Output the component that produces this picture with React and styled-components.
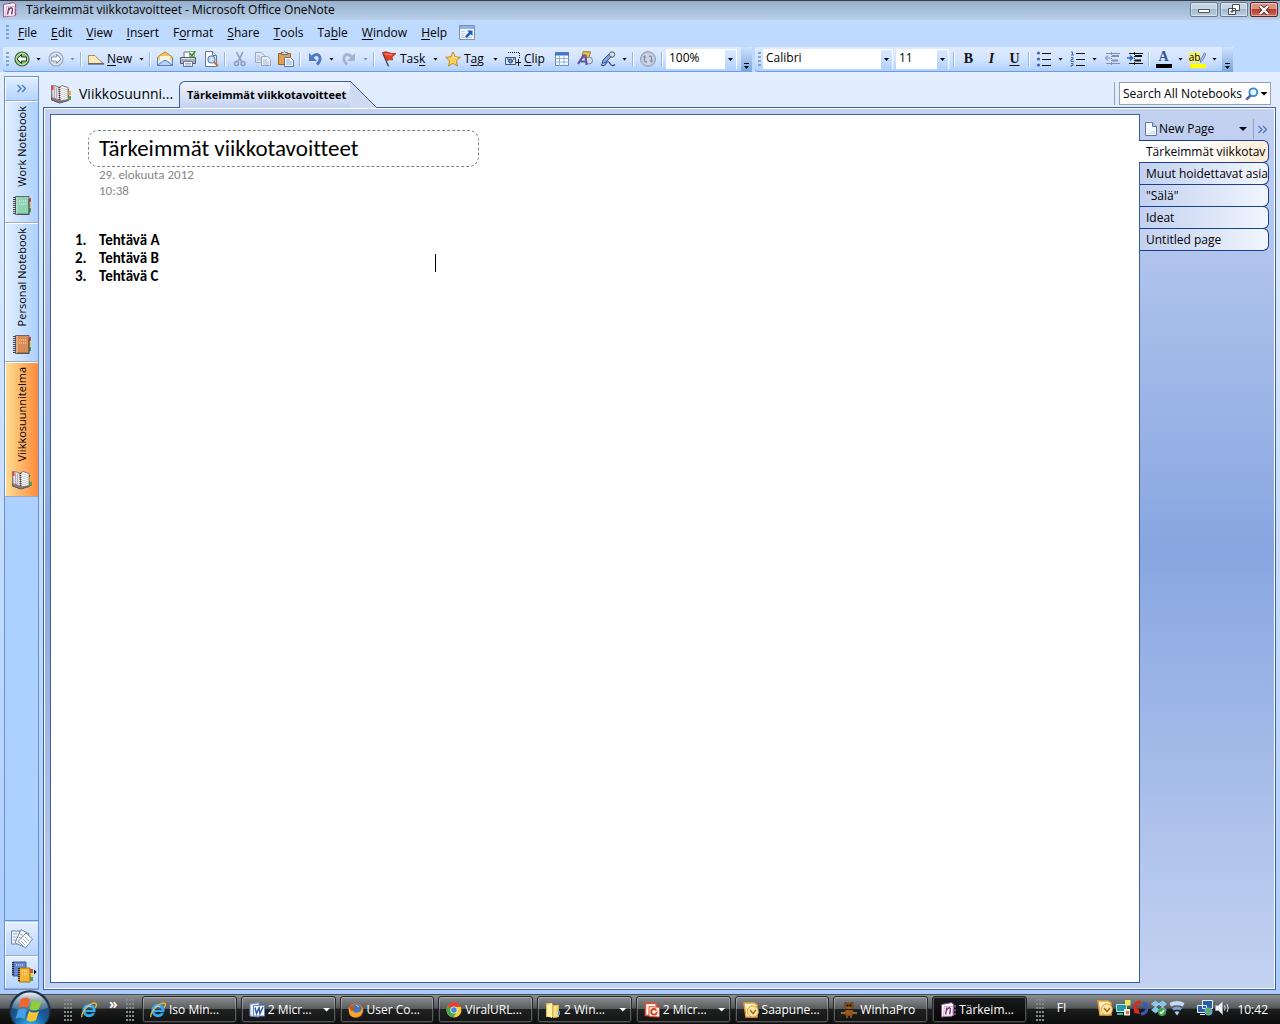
import React from "react";
import styled, { createGlobalStyle } from "styled-components";

const ui = `"Open Sans", "Noto Sans", sans-serif`;
const note = `Carlito, Lato, sans-serif`;
const line = "#3b5f9f";

const Global = createGlobalStyle`
  *, *::before, *::after { box-sizing: border-box; }
  html, body, #root { height: 100%; }
  body { margin: 0; overflow: hidden; font: 12px/16px ${ui}; color: #000; }
  button, input, select { font: inherit; color: inherit; margin: 0; padding: 0; border: 0; background: none; border-radius: 0; outline: 0; }
  svg { display: block; flex: none; }
  u { text-underline-offset: 2px; }
`;

/* ---------- icons ---------- */
const Svg = ({ s = 16, w, h, box = "0 0 16 16", children }) => (
  <svg width={w || s} height={h || s} viewBox={box} fill="none" aria-hidden="true">{children}</svg>
);

const OneNote = ({ s = 16 }) => (
  <Svg s={s}>
    <path d="M1.500 2.500 11.500.7l2 1.300v11.500l-12 1.500z" fill="#fbf4fb" stroke="#8d5a89" />
    <path d="M4.500 4.500h8.500l-1 9.500H3.500z" fill="#fff" stroke="#c9a3c7" strokeWidth=".8" />
    <path d="m5.500 12.500 1.500-7M6.500 8.500q2-3.500 3.500-2.500.8.800.2 3l-.7 3.500" stroke="#80397b" strokeWidth="1.500" />
    <path d="M15 3v2.500M15 7v2.500M15 11v2" stroke="#c58ac1" />
  </Svg>
);
const Arrow = ({ dir = 1, c, bg, edge }) => (
  <Svg>
    <circle cx="8" cy="8" r="7" fill={bg} stroke={edge} strokeWidth="1.200" />
    <circle cx="8" cy="8" r="5.800" stroke="#fff" opacity=".45" />
    <path d={dir < 0 ? "M3 8l4.500-4.500V6h5v4h-5v2.500z" : "M13 8 8.500 3.500V6h-5v4h5v2.500z"} fill="#fff" stroke={c} />
  </Svg>
);
const NewIcon = () => <Svg><path d="M.5 12.500V4.500h6.500q3 4 8.500 8z" fill="#fbe9bd" stroke="#a78d56" /><path d="M0 13h16" stroke="#2c3d6c" /></Svg>;
const Mail = () => (
  <Svg>
    <path d="M.5 6 8 .8 15.500 6v8.500H.5z" fill="#f6c15d" stroke="#c08f3d" />
    <path d="M3 5h10v6H3z" fill="#fff7dd" /><path d="m.5 7 5 4-5 3.500zM15.500 7l-5 4 5 3.500z" fill="#d4e6fb" />
    <path d="M.5 14.500 6 10q2-1.500 4 0l5.500 4.500z" fill="#b7d3f5" stroke="#587fb6" /><path d="M.5 7v7.500h15V7" stroke="#587fb6" />
  </Svg>
);
const Printer = () => (
  <Svg>
    <path d="M4 6V1h7v5" fill="#fff" stroke="#6e7486" /><path d="M.5 6.500h15v6H.5z" fill="#a7adb9" stroke="#555b68" />
    <path d="M1.500 7.500h13" stroke="#dfe3ea" /><path d="M3.500 10.500h9v5h-9z" fill="#f7fafe" stroke="#6e7486" />
    <path d="M5 12.500h6M5 14h6" stroke="#6f9cd6" strokeWidth=".8" />
    <path d="M9.500.500h5v5h-5z" fill="#e5f4df" stroke="#5b9e44" strokeWidth=".7" /><path d="m10 2.500 2 2L15.500 0" stroke="#2a8c24" strokeWidth="1.500" />
  </Svg>
);
const Preview = () => (
  <Svg>
    <path d="M2.500.500h7l4 4v11h-11z" fill="#fff" stroke="#62779c" /><path d="M9.500.500v4h4" fill="#d8e4f5" stroke="#62779c" />
    <circle cx="8.500" cy="8.500" r="3.500" fill="#c9e4f8" stroke="#5a7aa5" strokeWidth="1.200" /><path d="m11 11 4 4" stroke="#bb7828" strokeWidth="2" />
  </Svg>
);
const Cut = () => (
  <Svg>
    <path d="m4.500 1 5 9.500M11 1 6 10.500" stroke="#8d9cb8" strokeWidth="1.600" />
    <circle cx="4.500" cy="12.500" r="2" stroke="#8d9cb8" strokeWidth="1.400" /><circle cx="11" cy="12.500" r="2" stroke="#8d9cb8" strokeWidth="1.400" />
  </Svg>
);
const Copy = () => (
  <Svg>
    <path d="M.5 1.500h6l3 3v7h-9z" fill="#e2eaf7" stroke="#98a7c2" /><path d="M6.500 5.500h6l3 3v6h-9z" fill="#edf2fb" stroke="#98a7c2" />
    <path d="M2 5h3M2 7h4M2 9h4M8 9h4M8 11h6M8 13h6" stroke="#a9b6cd" />
  </Svg>
);
const Paste = () => (
  <Svg>
    <path d="M.5 2.500h12v11H.5z" fill="#e3a04c" stroke="#98651f" /><path d="M3.500 3.500v-2h2l1-1 1 1h2v2z" fill="#dadfe6" stroke="#666d7a" />
    <path d="M6.500 6.500h6l3 3v6h-9z" fill="#fff" stroke="#5d7398" /><path d="M8 9h4M8 11h6M8 13h6" stroke="#7ca2da" />
  </Svg>
);
const Undo = ({ dim, flip }) => (
  <Svg>
    <g transform={flip ? "matrix(-1 0 0 1 16 0)" : undefined}>
      <path d="M5 6q4-4 7-1.500 3 4-2 9" stroke={dim ? "#a3b3ce" : "#4a78c4"} strokeWidth="2.800" />
      <path d="M2 2v8h8z" fill={dim ? "#a3b3ce" : "#4a78c4"} />
    </g>
  </Svg>
);
const Flag = () => <Svg><path d="m2 2.500 5.500 12.800" stroke="#4b4b55" strokeWidth="1.500" /><path d="M1.500 1.500q3.500-1.500 6 0t7.500 1l-4 3.500.5 3q-3-1-5.500.5z" fill="#e5412d" stroke="#ae2418" strokeWidth=".8" /><path d="m4 3 7 1" stroke="#ff947e" /></Svg>;
const Star = () => <Svg><path d="m8 1 2.100 4.800 5.200.5-3.900 3.500 1.100 5.200L8 12.300 3.500 15l1.100-5.200L.7 6.300l5.200-.5z" fill="#fbd158" stroke="#b98b2a" /><path d="m8 3.500 1 3 3 .5" stroke="#fff1b5" /></Svg>;
const Clip = () => (
  <Svg><path d="M3 1.500h11.500V7" stroke="#111" strokeDasharray="1 1" /><path d="M13.500 8v7M10 11.500h6" stroke="#111" />
    <path d="M.5 6.500h10v7H.5z" fill="#d9e8fc" stroke="#38547c" /><circle cx="5.500" cy="10" r="2" fill="#6798d5" stroke="#263f6a" /><path d="M2 8h1.500M8 8h1.500" stroke="#111" /></Svg>
);
const Table = () => (
  <Svg><path d="M1.500 1.500h13v13h-13z" fill="#fff" stroke="#6a86b8" /><path d="M1 1.500h14v3H1z" fill="#4277c8" /><path d="M1.500 7.500h13M1.500 11h13M5.500 4v11M10 4v11" stroke="#8fb0de" /></Svg>
);
const Shapes = () => (
  <Svg><path d="M6 .8h7.500l-1.500 6H5z" fill="#f1c54d" stroke="#9f7c27" /><circle cx="12" cy="9.500" r="3.500" fill="#d2dcea" stroke="#7587a0" /><path d="m1 13 5.500-8.500h2L9.500 14" stroke="#5d55a5" strokeWidth="2.200" /><path d="M3.500 10.500H9" stroke="#5d55a5" strokeWidth="2" /></Svg>
);
const Pen = () => (
  <Svg><path d="M1 13.500q3 2.500 5-1t4 0 5 1" stroke="#2d3f6c" strokeWidth="1.200" /><path d="m2 12.500 1-3.500 6-6 2.500 2.500-6 6z" fill="#7ba4e0" stroke="#375792" /><circle cx="12" cy="3.500" r="2.700" fill="#d9dce5" stroke="#555b6a" /></Svg>
);
const Sync = () => (
  <Svg>
    <circle cx="8" cy="8" r="7.500" fill="#b8c2d4" stroke="#94a1b7" /><circle cx="8" cy="8" r="6" fill="#ccd4e2" />
    <path d="M4.500 5.500v4q0 1.500 2.500 1.200M11.500 10.500v-4Q11.500 5 9 5.300" stroke="#8290a9" strokeWidth="1.400" />
    <path d="M2.800 6.500 4.500 4l2 2.500zM13.200 9.500 11.500 12l-2-2.500z" fill="#8290a9" />
  </Svg>
);
const HelpWin = () => (
  <Svg><path d="M.5.500h15v14H.5z" fill="#f4f8ff" stroke="#7c8fb3" /><path d="M1 1h14v3H1z" fill="#8fb2ec" /><path d="M2 6.500h4M2 8.500h4M2 10.500h3M2 12.500h11" stroke="#bccae0" /><path d="M8 5.500h5.500V11l-1.800-1.800-4 3.800-1.700-1.700 3.800-4z" fill="#195dc0" /></Svg>
);
const List = ({ nums }) => (
  <Svg>
    {[2, 8, 14].map((y, i) => (
      <g key={y}>
        <path d={`M6 ${y + 0.5}h9`} stroke="#111" />
        {nums ? <path d={i ? `M1 ${y - 1.5}h2v2H1v2h3` : `M1 ${y - 1}h1.500V${y + 2}M1 ${y + 2}h3`} stroke="#3e68b4" /> : <circle cx="2.500" cy={y} r="1.600" fill="#3e68b4" />}
      </g>
    ))}
  </Svg>
);
const Indent = ({ dim }) => {
  const c = dim ? "#8190ac" : "#111";
  return (
    <Svg>
      <path d="M2 2.500h14M2 12.500h14" stroke={c} /><path d="M8 5h7M8 9.500h6" stroke={c} strokeWidth="2" /><path d="M7.500 1v14" stroke={c} strokeDasharray="1 1" />
      <path d={dim ? "M6.500 7H2M4 4.500 1.500 7 4 9.500" : "M0 7h5M3 4.500 5.500 7 3 9.500"} stroke={dim ? "#94aad0" : "#2465cf"} strokeWidth="1.600" />
    </Svg>
  );
};
const Marker = () => <Svg w={6} h={11} box="0 0 6 11"><path d="M0 10.500 1 7l3.500-6L6 2 2.500 8.500z" fill="#c3cbe0" stroke="#5b6a94" strokeWidth=".8" /></Svg>;
const Magnifier = () => <Svg s={14}><circle cx="9.500" cy="6" r="4.500" fill="#e4f5ff" stroke="#3989cc" strokeWidth="2" /><path d="m6.500 9.500-5 5" stroke="#505fa3" strokeWidth="3" /></Svg>;
const PageIcon = () => <Svg w={12} h={14} box="0 0 12 14"><path d="M.5.500h7l4 4v9H.5z" fill="#f7fbff" stroke="#65799e" /><path d="M7.500.500v4h4" fill="#b9cbe8" stroke="#65799e" /><path d="M2 12h8V8z" fill="#d3e2f7" /></Svg>;
const Chevrons = () => <Svg w={9} h={9} box="0 0 9 9"><path d="m.5 1 3.500 3.500L.5 8M5 1l3.500 3.500L5 8" stroke="#4778bb" strokeWidth="1.300" /></Svg>;
const Notebook = ({ c }) => (
  <Svg w={18} h={20} box="0 0 18 20">
    <path d="M14 2h4v4h-4z" fill="#dd4b42" /><path d="M14 7h4v4h-4z" fill="#f0b93a" /><path d="M14 12h4v4h-4z" fill="#559d4c" />
    <path d="M2.500.500H16v18H2.500z" fill={c} stroke="#6b6663" /><path d="M4 1v17" stroke="#fff" opacity=".5" />
    <path d="M1.500 1v18" stroke="#444" strokeWidth="3" strokeDasharray="1 1" /><path d="M6 5h7M6 8h7" stroke="#fff" strokeDasharray="1 1" opacity=".8" /><path d="M4 18h12V3" stroke="#0003" strokeWidth="2" />
  </Svg>
);
const OpenBook = () => (
  <Svg w={22} h={20} box="0 0 22 20">
    <path d="M2 4 1.500 16l8 3 9-2.500V5" fill="#857a80" stroke="#5d5158" /><path d="M18 7h3v4h-3z" fill="#f1aa34" /><path d="M18 12h3v4h-3z" fill="#53a24d" />
    <path d="M1.500 1.500 6 2l4 2v13l-5-2.500-3-.5z" fill="#e6e3e6" stroke="#81757b" /><path d="M1 2h2.500v4H1z" fill="#d74c4e" /><path d="M4.500 3v11M6.500 4v11" stroke="#b3adb1" />
    <path d="M9 3.500 12 1.500l6 2v12l-8 1.500z" fill="#fff" stroke="#81757b" /><path d="M12 4v11M14 4v11M16 5v10" stroke="#a9a3a7" strokeDasharray="1 1" /><path d="M9.500 3v14" stroke="#504850" strokeWidth="2" strokeDasharray="1 1" />
  </Svg>
);
const Pages = () => (
  <Svg w={22} h={20} box="0 0 22 20"><path d="M.5 2h8v13h-8z" fill="#f2f6fd" stroke="#7283a3" /><path d="m10 .700 8 4-6 13-8-4z" fill="#f8faff" stroke="#7283a3" /><path d="m15 4 6.500 6-7 9L7 12.500z" fill="#fff" stroke="#7283a3" /><path d="M2 5h4M2 8h4M2 11h3M9 5l4 2M8 8l3 2M14 8l4 4M12 10l4 4M10 12l4 4" stroke="#9daac3" /></Svg>
);
const Books = () => (
  <Svg w={22} h={22} box="0 0 22 22"><path d="M2 1h13v14H2z" fill="#6486d0" stroke="#3d5697" /><path d="M2 1v14" stroke="#222" strokeWidth="2" strokeDasharray="1 1" /><path d="M18 8h4v4h-4z" fill="#dd4b42" /><path d="M18 12.500h4v3h-4z" fill="#f0d03a" /><path d="M18 16h4v4h-4z" fill="#559d4c" /><path d="M8 7h11v14H8z" fill="#f7b52d" stroke="#987125" /><path d="M8 7v14" stroke="#222" strokeWidth="2" strokeDasharray="1 1" /><path d="M5 4h7M11 10h6M11 13h6" stroke="#fff" strokeDasharray="1 1" /></Svg>
);
const IE = () => (
  <Svg w={16} h={16} box="0 0 17 17"><circle cx="8.500" cy="9" r="5.500" stroke="#35a8ec" strokeWidth="3.200" /><path d="M4 9.500h10" stroke="#35a8ec" strokeWidth="2.500" /><path d="M11.500 11H17v1h-5z" fill="#191919" /><path d="M1 16Q0 12 6 6q6-6 9.500-4.500 2 1-.5 4.500" stroke="#f2bd35" strokeWidth="1.400" /><path d="M5 5.500q3-2.500 6 0" stroke="#a1e0ff" /></Svg>
);
const Word = () => <Svg><path d="M1 2 10 .8V15L1 14z" fill="#e8effb" stroke="#6f8fc9" /><path d="M4.500 3.500h11v10.500h-11z" fill="#fff" stroke="#5f86c8" /><path d="m6 5.500 1.500 6L10 6l1 5.500L14 5" stroke="#2c56a8" strokeWidth="1.500" /></Svg>;
const Ppt = () => <Svg><path d="M1.500 1.500h10.500l1.500 12H1.500z" fill="#fff" stroke="#e0552e" strokeWidth="1.600" /><path d="m5 4.500 10.500.8V15L5 14.500z" fill="#fff4ee" stroke="#dc4d25" /><circle cx="10" cy="9.800" r="2.800" stroke="#d84120" strokeWidth="1.800" /><path d="M10 9.500h3v-3" stroke="#fff" /></Svg>;
const Outlook = () => <Svg><path d="M1 1h10l3 2v12H3z" fill="#fff2cb" stroke="#e8a135" strokeWidth="1.500" /><circle cx="9.800" cy="9.500" r="5.600" fill="#fbe6a8" stroke="#d99a35" /><path d="m7 8 3 3.500L13 8" stroke="#a96515" strokeWidth="1.500" /></Svg>;
const Firefox = () => <Svg><circle cx="8" cy="8.500" r="7.300" fill="#e5701c" /><circle cx="8.500" cy="7" r="4.800" fill="#3b78c6" /><path d="M1 4q0 4 4 5 2 3 6 1 2 0 3.500-5 1 6-3 9-6 3-9.500-1Q0 9 1 4z" fill="#f9a52b" /><path d="m2 4 5 1-1 3-3 1z" fill="#ca4d15" /><path d="m8 3 3 2" stroke="#a9d9f7" /></Svg>;
const Chrome = () => <Svg><circle cx="8" cy="8" r="7.500" fill="#f7cb38" /><path d="M8 8 1.500 4.200A7.500 7.500 0 0 1 15 5H8z" fill="#df4231" /><path d="m8 8-6.500-3.800A7.500 7.500 0 0 0 7.500 15.500l3.500-6z" fill="#48a54a" /><circle cx="8" cy="8" r="3.600" fill="#f5f5f5" /><circle cx="8" cy="8" r="2.800" fill="#4388dd" /></Svg>;
const Folder = () => <Svg><path d="M1 1h6l1 2h6v12H1z" fill="#e1b850" /><path d="m2 3 5-2v15l-5-2z" fill="#fff1a9" /><path d="m8 4 5-1v12l-5 1z" fill="#f7df83" stroke="#cda842" strokeWidth=".6" /><path d="M14 9v4" stroke="#519bd8" strokeWidth="2" /></Svg>;
const Owl = () => (
  <Svg>
    <path d="m4 0 2 1h4l2-1v5l-1 2q3 4 0 7H5q-3-3 0-7L4 5z" fill="#96591f" stroke="#4a2a0c" strokeWidth=".6" />
    <circle cx="6.500" cy="3.500" r="1.200" fill="#2b1606" /><circle cx="9.500" cy="3.500" r="1.200" fill="#2b1606" /><path d="M5 7.500h6" stroke="#2b1606" /><path d="M5 15h2m2 0h2" stroke="#d58c35" />
    <path d="M.5 11h3M12.500 11h3" stroke="#f3c62c" strokeDasharray="1 1" strokeWidth="2" />
  </Svg>
);
const Bits = () => <Svg><path d="M1.500 4.500h10v7h-10z" fill="#2599a5" stroke="#b8e6df" /><path d="M10 0h5.500v5.500H10z" fill="#f0ea5a" /><path d="M9 9h6v6.500H9z" fill="#e2eee8" /><path d="M2 14h6" stroke="#47b9a3" strokeWidth="2" /><path d="M11 11h3v3h-3z" fill="#df7439" /></Svg>;
const Swirl = () => <Svg><path d="M8 2Q0 2 3 12" stroke="#d52d24" strokeWidth="3.200" /><path d="m7 14-6-1 4-5z" fill="#d52d24" /><path d="M8 14q8-1 5-10" stroke="#3858b4" strokeWidth="3.200" /><path d="m9 2 6 1-4 5z" fill="#3858b4" /></Svg>;
const Dropbox = () => <Svg><path d="m4.500 1 4 3-4 3-4-3zM11.500 1l4 3-4 3-4-3zM4.500 7l4 3-4 3-4-3zM11.500 7l4 3-4 3-4-3z" fill="#7bc8f4" stroke="#c9edff" strokeWidth=".5" /><circle cx="11" cy="12" r="4" fill="#38a74b" /><path d="m9 12 1.500 1.500L13 10" stroke="#fff" strokeWidth="1.400" /></Svg>;
const Wifi = () => <Svg><path d="M.5 3q7.500-4 15 0l-1.500 3.500q-6-2.500-12 0z" fill="#c3d8f2" /><path d="M3 8q5-2.500 10 0l-1.500 2.500q-3.500-1.500-7 0z" fill="#78a1d2" /><path d="M5.500 12q2.500-1.500 5 0L8 15.500z" fill="#b5cee9" /></Svg>;
const Net = () => <Svg><path d="M5.500.500h10v8h-10zM.5 5.500h9v7h-9z" fill="#275da9" stroke="#e9f1f8" /><circle cx="11.500" cy="11.500" r="4" fill="#55acd8" /><path d="m9 9 4-1 1 4-3 3z" fill="#65ad48" /><path d="M3 14.500h5" stroke="#fff" /></Svg>;
const Sound = () => <Svg><path d="M.5 5.500h3l4-4v13l-4-4h-3z" fill="#eef1f5" stroke="#9ba3ad" /><path d="M9.500 5.500q1.500 2.500 0 5M12 4q2.500 4 0 8" stroke="#e2e9f1" /></Svg>;
const Orb = () => (
  <Svg s={42} box="0 0 42 42">
    <defs><radialGradient id="orb" cx=".5" cy=".9" r=".9"><stop stopColor="#35bcf1" /><stop offset=".45" stopColor="#175da0" /><stop offset="1" stopColor="#263a4d" /></radialGradient><linearGradient id="gloss" x2="0" y2="1"><stop stopColor="#f3f7fa" /><stop offset="1" stopColor="#7890a3" stopOpacity=".4" /></linearGradient></defs>
    <circle cx="21" cy="21" r="20" fill="url(#orb)" stroke="#1d3042" strokeWidth="1.500" /><path d="M3 18A18.200 18.200 0 0 1 39 18Q21 24 3 18z" fill="url(#gloss)" />
    <path d="M12 9q5-3 9 0l-2.500 9q-5-3-9 0z" fill="#ef672d" /><path d="M23 10q5 3 10 0l-3 9q-5 3-9.500 0z" fill="#8fcb3d" /><path d="M9 20q5-3 9 0l-2.500 9q-5-3-9 0z" fill="#46a1e2" /><path d="M20 21q5 3 10 0l-3 9q-5 3-9.500 0z" fill="#fbc52f" />
  </Svg>
);

/* ---------- shell ---------- */
const Shell = styled.div`display: flex; flex-direction: column; height: 100vh; background: #bfdaff;`;
const TitleBar = styled.header`
  display: flex; align-items: center; height: 20px; padding: 0 2px 1px; gap: 8px;
  border-top: 1px solid #3b3a3d; background: linear-gradient(#94afce, #b9d0e8);
  h1 { flex: 1; margin: 0; font-size: 12px; font-weight: 400; }
`;
const WinButtons = styled.div`display: flex; gap: 2px; align-self: flex-start; padding-top: 1px;`;
const WinButton = styled.button`
  display: grid; place-items: center; width: 28px; height: 15px; border: 1px solid ${p => (p.$close ? "#5c2424" : "#65798f")}; border-radius: 2px;
  box-shadow: inset 0 0 0 1px #ffffff70;
  background: ${p => (p.$close ? "linear-gradient(#d99284 0 45%, #b8392c 45%, #d06a50)" : "linear-gradient(#c6d5e6 0 45%, #9fb5cd 45%, #bdd0e4)")};
`;
const Grip = styled.span`width: 3px; height: 15px; margin: 0 1px 0 3px; flex: none; background: repeating-linear-gradient(#7ba2da 0 2px, transparent 2px 4px);`;
const MenuBar = styled.nav`display: flex; align-items: center; height: 27px; padding: 0 3px 2px;`;
const Menus = styled.div`display: flex; padding: 0 1px;`;
const MenuItem = styled.button`padding: 0 7px; height: 20px; &:hover { background: #ffe7a2; }`;

const Toolbars = styled.div`display: flex; gap: 3px; height: 25px; padding-left: 3px;`;
const Toolbar = styled.div`
  display: flex; align-items: center; border-radius: 3px 0 0 3px; border-bottom: 1px solid #6d9ddd;
  background: linear-gradient(#dfebff, #d3e4ff 50%, #b0d0fd);
`;
const ToolButton = styled.button`
  display: flex; align-items: center; justify-content: ${p => (p.$w ? "flex-start" : "center")}; gap: 3px; white-space: nowrap;
  width: ${p => p.$w || 23}px; height: 22px; padding: ${p => (p.$w ? "0 0 0 4px" : 0)}; flex: none;
  &:hover { background: #ffe7a2; }
`;
const DropButton = styled.button`display: grid; place-items: center; width: 11px; height: 22px; flex: none; color: ${p => (p.$dim ? "#8190ac" : "#000")};`;
const Caret = styled.span`flex: none; width: ${p => (p.$big ? 8 : 5)}px; height: ${p => (p.$big ? 4 : 3)}px; background: currentColor; clip-path: polygon(0 0, 100% 0, 50% 100%);`;
const Divider = styled.span`width: 2px; height: 15px; margin: 0 2px; flex: none; background: linear-gradient(90deg, #8fb7ee 50%, #fff 50%);`;
const Overflow = styled.button`
  display: flex; flex-direction: column; align-items: center; justify-content: flex-end; gap: 2px; align-self: stretch;
  width: 11px; margin: 0 0 -1px 2px; padding-bottom: 3px; border-radius: 0 3px 3px 0; background: linear-gradient(#cfe1fb, #7aa5df);
  &::before { content: ""; width: 5px; height: 1px; background: #000; }
`;
const ComboBox = styled.div`
  display: grid; grid-template-columns: 1fr 11px; align-items: stretch; width: ${p => p.$w}px; height: 20px; margin: 0 2px 0 1px; padding: 1px; background: #fff;
  select { grid-area: 1 / 1 / 2 / 3; appearance: none; padding: 0 12px 3px 2px; min-width: 0; }
`;
const ComboArrow = styled.span`grid-area: 1 / 2; display: grid; place-items: center; pointer-events: none; background: linear-gradient(#dceaff, #b3d1fc);`;
const Letter = styled.span`font: ${p => p.$f || ""} 14px/16px "Liberation Serif", serif; color: ${p => p.$c || "#111"};`;
const Swatch = styled.span`
  display: flex; align-items: center; justify-content: center; width: 16px; height: 17px; border-bottom: 4px solid ${p => p.$c};
`;
const Marked = styled.span`font-size: 10px; line-height: 11px; background: #f5f06d;`;

/* ---------- body ---------- */
const Body = styled.div`display: flex; flex: 1; min-height: 0; padding: 0 4px; gap: 4px; background: linear-gradient(#e3eeff, #cfe2ff 35%, #a9cbff);`;
const Rail = styled.aside`
  display: flex; flex-direction: column; width: 35px; margin: 4px 0; border: 1px solid #6593cf; background: #acd0ff; flex: none;
`;
const RailButton = styled.button`
  display: flex; flex-direction: column; align-items: center; justify-content: ${p => (p.$book ? "space-between" : "center")};
  height: ${p => p.$h}px; padding: ${p => (p.$book ? "5px 0 6px" : 0)}; border-bottom: 1px solid #a0acbd; box-shadow: inset 1px 1px #fff;
  background: ${p => (p.$active ? "linear-gradient(90deg, #ffdf93, #ff8b3b)" : p.$book ? "linear-gradient(90deg, #e3efff, #acd0ff)" : "linear-gradient(#e3efff, #b5d4ff)")};
`;
const RailLabel = styled.span`writing-mode: vertical-rl; transform: rotate(180deg); white-space: nowrap; font-size: 11px; line-height: 18px;`;
const RailSpace = styled.div`flex: 1; border-bottom: 1px solid #6593cf; margin-bottom: 1px;`;
const BooksRow = styled.div`display: flex; align-items: center; gap: 1px; padding-left: 4px;`;
const SideCaret = styled.span`width: 3px; height: 6px; background: #000; clip-path: polygon(0 0, 100% 50%, 0 100%);`;

const Main = styled.main`display: flex; flex: 1; flex-direction: column; min-width: 0; padding-bottom: 4px;`;
const SectionRow = styled.div`display: flex; align-items: flex-end; height: 36px; margin-bottom: -1px; z-index: 1;`;
const BookName = styled.button`display: flex; align-items: center; gap: 7px; width: 136px; height: 28px; padding-left: 7px; font-size: 14px; white-space: nowrap;`;
const SectionTab = styled.button`
  display: flex; height: 27px; font-size: 11px; font-weight: 700; white-space: nowrap;
  span { height: 27px; width: 171px; padding: 5px 0 0 7px; text-align: left; border: solid ${line}; border-width: 1px 0 0 1px; border-radius: 6px 0 0 0; background: linear-gradient(#f1f4fc, #dbe4f6 50%, #c4d2f1); }
  &::after { content: ""; width: 27px; height: 27px; background: linear-gradient(to top right, #d0dbf3 49%, ${line} 49% 51%, transparent 51%); }
`;
const SearchArea = styled.div`display: flex; margin: 0 5px 3px auto; padding-left: 4px; border-left: 1px solid #9b9fa8;`;
const SearchBox = styled.label`
  display: flex; align-items: center; gap: 1px; width: 152px; height: 23px; padding: 0 2px 0 3px; border: 1px solid #9b9fa8; background: #fff;
  input { flex: 1; min-width: 0; }
`;
const Frame = styled.div`
  display: flex; flex: 1; min-height: 0; padding: 5px; border: 1px solid ${line}; box-shadow: inset 0 0 0 1px #fff;
  background: linear-gradient(#c4d2f1, #87a6e1 50%, #c4d2f1);
`;
const Pane = styled.article`position: relative; flex: 1; min-width: 0; margin: 1px 0 1px 1px; padding: 15px 24px; border: 1px solid ${line}; background: #fff; font-family: ${note}; font-variant-ligatures: none;`;
const TitleInput = styled.input`
  && { display: block; width: 391px; height: 37px; margin-left: 13px; padding: 0 10px 2px; border: 1px dashed #808080; border-radius: 10px; font-size: 23px; line-height: 28px; }
`;
const Stamp = styled.p`margin: 0 0 32px 24px; font-size: 13px; color: #858585; time { display: block; }`;
const Tasks = styled.ol`
  margin: 0; padding: 0; list-style: none; font-weight: 700; font-size: 15px; line-height: 18px;
  li { display: flex; } li span { width: 24px; }
`;
const InsertionPoint = styled.span`position: absolute; left: 384px; top: 139px; width: 1px; height: 18px; background: #000;`;

const PageList = styled.aside`display: flex; flex-direction: column; width: 130px; flex: none; padding-top: 5px;`;
const PageHead = styled.div`display: flex; align-items: center; height: 22px; padding-left: 5px;`;
const NewPage = styled.button`display: flex; flex: 1; align-items: center; gap: 2px;`;
const Collapse = styled.button`display: grid; place-items: center; width: 17px; height: 20px; margin-left: 6px; border-left: 1px solid #9aa4b8;`;
const PageTab = styled.button`
  height: 23px; margin: 0 1px -1px ${p => (p.$active ? "-1px" : 0)}; padding: 0 0 0 ${p => (p.$active ? 7 : 6)}px; overflow: hidden; white-space: nowrap; text-align: left;
  border: solid #17408f; border-width: 1px 1px 1px 0; border-radius: 0 6px 6px 0; position: relative;
  background: ${p => (p.$active ? "linear-gradient(90deg, #fff 40%, #ffecd6)" : "linear-gradient(90deg, #c3d1f0, #f1f5fd)")};
`;

/* ---------- task bar ---------- */
const TaskBar = styled.footer`
  display: flex; align-items: center; height: 30px; padding: 0 12px 0 9px; color: #fff; border-top: 1px solid #4a4d50;
  background: linear-gradient(#8b8e90, #55585a 45%, #1b1c1d 50%, #0c0c0c);
`;
const Start = styled.button`align-self: flex-start; width: 42px; height: 29px; margin-right: 13px; position: relative; svg { position: absolute; left: 0; top: -5px; clip-path: inset(0 0 7px); }`;
const Dots = styled.span`width: 9px; height: 22px; flex: none; background: radial-gradient(circle at 1px 1px, #86888a 0 1px, transparent 1px) 0 0 / 3px 4px;`;
const Quick = styled.button`margin: 0 12px 0 8px;`;
const More = styled.button`align-self: flex-start; width: 8px; margin: 1px 9px 0 0; font-weight: 700; font-size: 14px;`;
const Windows = styled.div`display: flex; flex: 1; gap: 4px; min-width: 0; margin: 0 9px 0 7px;`;
const TaskButton = styled.button`
  display: flex; flex: 1; align-items: center; gap: 3px; min-width: 0; height: 27px; padding: 0 4px 0 7px; color: #fff;
  border: 1px solid #252627; border-radius: 3px; box-shadow: inset 0 0 0 1px #ffffff48;
  background: ${p => (p.$active ? "linear-gradient(#1a1b1c, #050505)" : "linear-gradient(#8a8d8f, #58595b 48%, #202122 50%, #141414)")};
  b { flex: 1; font-weight: 400; text-align: left; overflow: hidden; white-space: nowrap; }
`;
const Lang = styled.button`margin: 0 31px 3px 12px;`;
const Tray = styled.div`display: flex; gap: 2px; margin: 0 6px 4px 0; svg:nth-child(6) { margin-left: 10px; }`;

const Drop = ({ dim, label }) => <DropButton $dim={dim} aria-label={label}><Caret /></DropButton>;
const Combo = ({ w, label, value }) => (
  <ComboBox $w={w}><select aria-label={label} defaultValue={value}><option>{value}</option></select><ComboArrow><Caret /></ComboArrow></ComboBox>
);
const Tool = ({ label, children }) => <ToolButton aria-label={label}>{children}</ToolButton>;

const menus = [["", "F", "ile"], ["", "E", "dit"], ["", "V", "iew"], ["", "I", "nsert"], ["F", "o", "rmat"], ["", "S", "hare"], ["", "T", "ools"], ["Ta", "b", "le"], ["", "W", "indow"], ["", "H", "elp"]];
const windows = [
  [IE, "Iso Min..."], [Word, "2 Micr...", true], [Firefox, "User Co..."], [Chrome, "ViralURL..."], [Folder, "2 Win...", true],
  [Ppt, "2 Micr...", true], [Outlook, "Saapune..."], [Owl, "WinhaPro"], [OneNote, "Tärkeim..."],
];
const pages = ["Tärkeimmät viikkotav", "Muut hoidettavat asia", "\"Sälä\"", "Ideat", "Untitled page"];

export default function App() {
  return (
    <Shell>
      <Global />
      <TitleBar>
        <OneNote /><h1>Tärkeimmät viikkotavoitteet - Microsoft Office OneNote</h1>
        <WinButtons>
          <WinButton aria-label="Minimize"><Svg w={12} h={9} box="0 0 12 9"><path d="M.5 4.500h11v3H.5z" fill="#fff" stroke="#555" /></Svg></WinButton>
          <WinButton aria-label="Restore"><Svg w={12} h={11} box="0 0 12 11"><path d="M4.500.500h7v6h-7zM.5 4.500h7v6h-7z" fill="#fff" stroke="#444b55" /><path d="M3 7h2v1H3z" fill="#9fb5cd" stroke="#444b55" /></Svg></WinButton>
          <WinButton $close aria-label="Close"><Svg w={12} h={10} box="0 0 12 10"><path d="m2 1 8 8m0-8L2 9" stroke="#5c2424" strokeWidth="4" /><path d="m2 1 8 8m0-8L2 9" stroke="#fff" strokeWidth="2.400" /></Svg></WinButton>
        </WinButtons>
      </TitleBar>
      <MenuBar>
        <Grip />
        <Menus>{menus.map(([a, b, c]) => <MenuItem key={a + b + c}>{a}<u>{b}</u>{c}</MenuItem>)}</Menus>
        <ToolButton aria-label="Full page view"><HelpWin /></ToolButton>
      </MenuBar>
      <Toolbars>
        <Toolbar role="toolbar" aria-label="Standard">
          <Grip />
          <Tool label="Back"><Arrow dir={-1} c="#1c3a18" bg="#8bc675" edge="#3c6236" /></Tool><Drop label="Back list" />
          <Tool label="Forward"><Arrow c="#8594b2" bg="#ccd7ea" edge="#94a3be" /></Tool><Drop dim label="Forward list" />
          <Divider />
          <ToolButton $w={52}><NewIcon /><span><u>N</u>ew</span></ToolButton><Drop label="New list" />
          <Divider />
          <Tool label="E-mail"><Mail /></Tool><Tool label="Print"><Printer /></Tool><Tool label="Print preview"><Preview /></Tool>
          <Divider />
          <Tool label="Cut"><Cut /></Tool><Tool label="Copy"><Copy /></Tool><Tool label="Paste"><Paste /></Tool>
          <Divider />
          <Tool label="Undo"><Undo /></Tool><Drop label="Undo list" /><Tool label="Redo"><Undo dim flip /></Tool><Drop dim label="Redo list" />
          <Divider />
          <ToolButton $w={53}><Flag /><span>Tas<u>k</u></span></ToolButton><Drop label="Task list" />
          <ToolButton $w={49}><Star /><span>T<u>a</u>g</span></ToolButton><Drop label="Tag list" />
          <ToolButton $w={49}><Clip /><span><u>C</u>lip</span></ToolButton>
          <Tool label="Table"><Table /></Tool><Tool label="Drawing"><Shapes /></Tool><Tool label="Pen"><Pen /></Tool><Drop label="Pen list" />
          <Divider />
          <Tool label="Sync"><Sync /></Tool>
          <Divider />
          <Combo w={71} label="Zoom" value="100%" />
          <Overflow aria-label="More standard tools"><Caret /></Overflow>
        </Toolbar>
        <Toolbar role="toolbar" aria-label="Formatting">
          <Grip />
          <Combo w={130} label="Font" value="Calibri" /><Combo w={53} label="Font size" value="11" />
          <Divider />
          <Tool label="Bold"><Letter $f="bold">B</Letter></Tool><Tool label="Italic"><Letter $f="italic bold">I</Letter></Tool><Tool label="Underline"><Letter $f="bold"><u>U</u></Letter></Tool>
          <Divider />
          <Tool label="Bullets"><List /></Tool><Drop label="Bullet styles" /><Tool label="Numbering"><List nums /></Tool><Drop label="Number styles" />
          <Tool label="Decrease indent"><Indent dim /></Tool><Tool label="Increase indent"><Indent /></Tool>
          <Divider />
          <Tool label="Font color"><Swatch $c="#000"><Letter $f="bold" $c="#36558f">A</Letter></Swatch></Tool><Drop label="Font colors" />
          <Tool label="Highlight"><Swatch $c="#ff0"><Marked>ab</Marked><Marker /></Swatch></Tool><Drop label="Highlight colors" />
          <Overflow aria-label="More formatting tools"><Caret /></Overflow>
        </Toolbar>
      </Toolbars>
      <Body>
        <Rail>
          <RailButton $h={24} aria-label="Expand navigation bar"><Chevrons /></RailButton>
          <RailButton $book $h={122}><RailLabel>Work Notebook</RailLabel><Notebook c="#8fd3b5" /></RailButton>
          <RailButton $book $h={139}><RailLabel>Personal Notebook</RailLabel><Notebook c="#d98d55" /></RailButton>
          <RailButton $book $active $h={135}><RailLabel>Viikkosuunnitelma</RailLabel><OpenBook /></RailButton>
          <RailSpace />
          <RailButton $h={34} aria-label="Unfiled notes"><Pages /></RailButton>
          <RailButton $h={33} aria-label="All notebooks"><BooksRow><Books /><SideCaret /></BooksRow></RailButton>
        </Rail>
        <Main>
          <SectionRow>
            <BookName><OpenBook />Viikkosuunni...</BookName>
            <SectionTab><span>Tärkeimmät viikkotavoitteet</span></SectionTab>
            <SearchArea>
              <SearchBox><input aria-label="Search" defaultValue="Search All Notebooks" /><Magnifier /><Caret $big /></SearchBox>
            </SearchArea>
          </SectionRow>
          <Frame>
            <Pane>
              <TitleInput aria-label="Page title" defaultValue="Tärkeimmät viikkotavoitteet" />
              <Stamp><time>29. elokuuta 2012</time><time>10:38</time></Stamp>
              <Tasks>
                {["A", "B", "C"].map((t, i) => <li key={t}><span>{i + 1}.</span>Tehtävä {t}</li>)}
              </Tasks>
              <InsertionPoint />
            </Pane>
            <PageList>
              <PageHead><NewPage><PageIcon />New Page</NewPage><Caret $big /><Collapse aria-label="Collapse page tabs"><Chevrons /></Collapse></PageHead>
              {pages.map((t, i) => <PageTab key={t} $active={i === 0}>{t}</PageTab>)}
            </PageList>
          </Frame>
        </Main>
      </Body>
      <TaskBar>
        <Start aria-label="Start"><Orb /></Start>
        <Dots />
        <Quick aria-label="Internet Explorer"><IE /></Quick>
        <More aria-label="More shortcuts">»</More>
        <Dots />
        <Windows>
          {windows.map(([Icon, t, more], i) => <TaskButton key={i} $active={i === 8}><Icon /><b>{t}</b>{more && <Caret $big />}</TaskButton>)}
        </Windows>
        <Dots />
        <Lang>FI</Lang>
        <Tray><Outlook /><Bits /><Swirl /><Dropbox /><Wifi /><Net /><Sound /></Tray>
        <time>10:42</time>
      </TaskBar>
    </Shell>
  );
}
